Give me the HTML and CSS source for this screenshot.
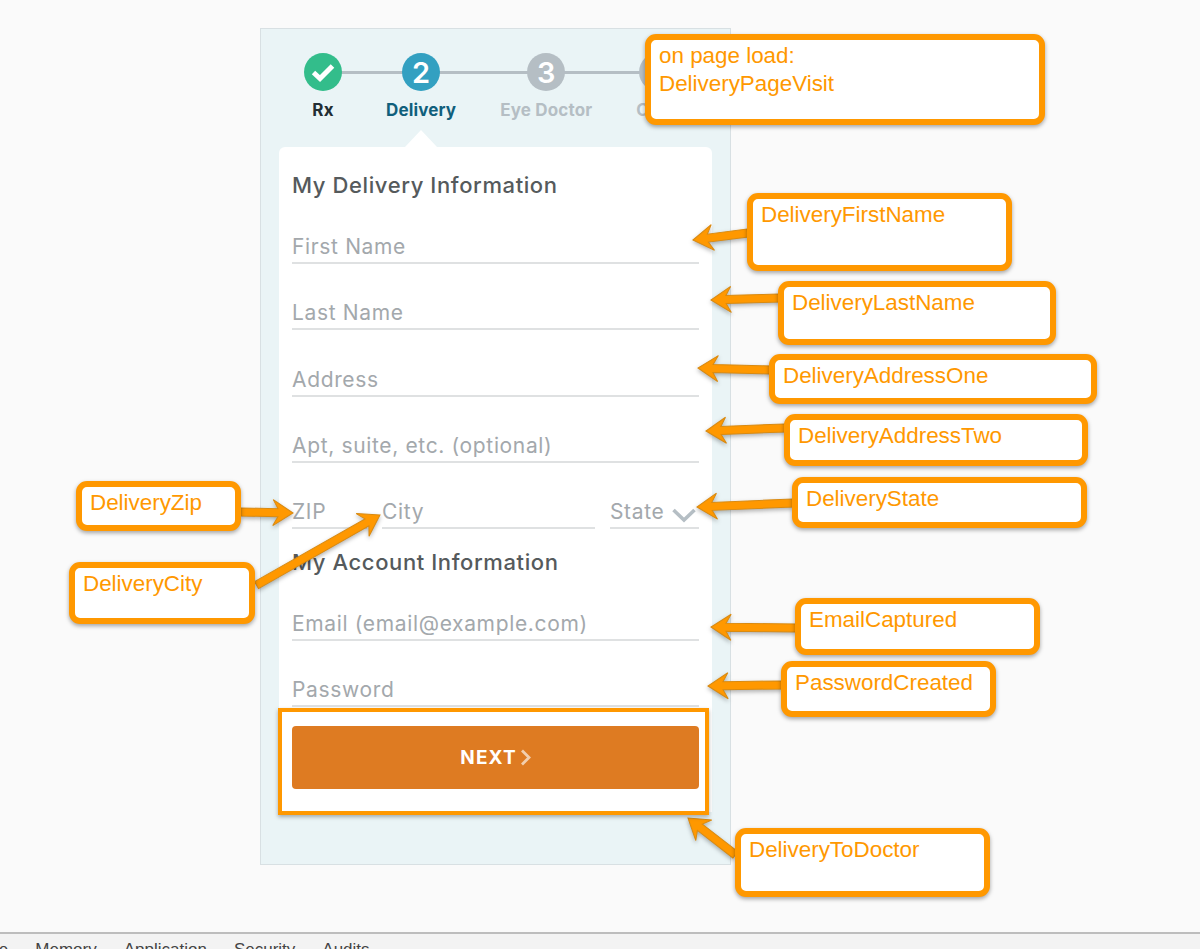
FILE: index.html
```html
<!DOCTYPE html>
<html lang="en">
<head>
  <meta charset="UTF-8" />
  <title>Delivery tracking notes</title>
  <link rel="stylesheet" href="styles.css">
</head>
<body>

  <div class="page">
    <section class="checkout">
      <ol class="steps">
        <li class="step done">
          <span class="step-dot">
            <svg width="24" height="24" viewBox="0 0 24 24"><path d="M2.500 12.500l6.500 6L21.500 6" fill="none" stroke="#fff" stroke-width="5"/></svg>
          </span>
          <span class="step-name">Rx</span>
        </li>
        <li class="step current">
          <span class="step-dot">2</span>
          <span class="step-name">Delivery</span>
        </li>
        <li class="step">
          <span class="step-dot">3</span>
          <span class="step-name">Eye Doctor</span>
        </li>
        <li class="step">
          <span class="step-dot">4</span>
          <span class="step-name">Chec</span>
        </li>
      </ol>

      <form class="panel">
        <h2>My Delivery Information</h2>
        <div class="field"><span>First Name</span></div>
        <div class="field"><span>Last Name</span></div>
        <div class="field"><span>Address</span></div>
        <div class="field"><span>Apt, suite, etc. (optional)</span></div>
        <div class="field-row">
          <div class="field zip"><span>ZIP</span></div>
          <div class="field city"><span>City</span></div>
          <div class="field state">
            <span>State</span>
            <svg width="24" height="15" viewBox="0 0 24 15"><path d="M1.500 2l10.500 10L22.500 2" fill="none" stroke="#b5bec4" stroke-width="3.600"/></svg>
          </div>
        </div>
        <h2 class="account-title">My Account Information</h2>
        <div class="field"><span>Email (email@example.com)</span></div>
        <div class="field"><span>Password</span></div>
        <button type="button" class="next">NEXT <svg width="11" height="17" viewBox="0 0 11 17"><path d="M2 1.500L9 8.500 2 15.500" fill="none" stroke="#f2cfae" stroke-width="2.800"/></svg></button>
      </form>
    </section>
  </div>

  <div class="devtools">
    <span class="tab-cut">Performance</span>
    <span>Memory</span>
    <span>Application</span>
    <span>Security</span>
    <span>Audits</span>
  </div>

  <!-- Annotations drawn over the screenshot -->
  <svg class="arrows" width="1200" height="949" viewBox="0 0 1200 949">
    <g fill="#ff9800" stroke="#d98a10" stroke-width="1">
      <path transform="translate(693 240) rotate(172.700)" d="M0 0L-20-13-15-4-55-4-55 4-15 4-20 13Z"/>
      <path transform="translate(711 300) rotate(178.300)" d="M0 0L-20-13-15-4-68-4-68 4-15 4-20 13Z"/>
      <path transform="translate(698 368) rotate(181.600)" d="M0 0L-20-13-15-4-73-4-73 4-15 4-20 13Z"/>
      <path transform="translate(706 431) rotate(177.800)" d="M0 0L-20-13-15-4-79-4-79 4-15 4-20 13Z"/>
      <path transform="translate(293 513) rotate(1.100)" d="M0 0L-20-13-15-4-52-4-52 4-15 4-20 13Z"/>
      <path transform="translate(380 515) rotate(-29.600)" d="M0 0L-20-13-15-4-142-4-142 4-15 4-20 13Z"/>
      <path transform="translate(697 507) rotate(177.600)" d="M0 0L-20-13-15-4-96-4-96 4-15 4-20 13Z"/>
      <path transform="translate(711 627) rotate(180.700)" d="M0 0L-20-13-15-4-85-4-85 4-15 4-20 13Z"/>
      <path transform="translate(708 686) rotate(179.200)" d="M0 0L-20-13-15-4-74-4-74 4-15 4-20 13Z"/>
      <path transform="translate(688 818) rotate(217.900)" d="M0 0L-20-13-15-4-60-4-60 4-15 4-20 13Z"/>
    </g>
  </svg>

  <div class="next-outline"></div>

  <div class="callout note-visit">on page load:<br>DeliveryPageVisit</div>
  <div class="callout note-first">DeliveryFirstName</div>
  <div class="callout note-last">DeliveryLastName</div>
  <div class="callout note-one">DeliveryAddressOne</div>
  <div class="callout note-two">DeliveryAddressTwo</div>
  <div class="callout note-zip">DeliveryZip</div>
  <div class="callout note-city">DeliveryCity</div>
  <div class="callout note-state">DeliveryState</div>
  <div class="callout note-email">EmailCaptured</div>
  <div class="callout note-password">PasswordCreated</div>
  <div class="callout note-doctor">DeliveryToDoctor</div>

</body>
</html>
```

FILE: styles.css
```css
* {
  box-sizing: border-box;
  margin: 0;
  padding: 0;
}

html, body {
  height: 949px;
  overflow: hidden;
  background: #fafafa;
}

body {
  position: relative;
  display: flex;
  flex-direction: column;
  font-family: "Inter", "Open Sans", sans-serif;
}

.page {
  flex: 1;
  padding: 28px 0 0 260px;
}

.checkout {
  width: 471px;
  height: 837px;
  background: #eaf4f6;
  border: 1px solid #d8e0e3;
  padding: 24px 18px 0;
}

/* Steps */
.steps {
  position: relative;
  display: flex;
  gap: 44px;
  list-style: none;
  padding-left: 25px;
}

.steps::before {
  content: "";
  position: absolute;
  left: 44px;
  top: 18px;
  width: 340px;
  height: 3px;
  background: #b5bec4;
}

.step {
  position: relative;
  display: flex;
  flex-direction: column;
  align-items: center;
  gap: 9px;
  min-width: 38px;
  color: #b5bec4;
}

.step-dot {
  display: flex;
  align-items: center;
  justify-content: center;
  width: 38px;
  height: 38px;
  border-radius: 50%;
  background: #b5bec4;
  color: #fff;
  font-size: 29px;
  font-weight: 600;
}

.step-name {
  font-size: 17px;
  line-height: 20px;
  font-weight: 700;
  letter-spacing: 0.15px;
  white-space: nowrap;
}

.step.done { color: #222d33; }
.step.done .step-dot { background: #33bd8b; }
.step.current { color: #105f7c; }
.step.current .step-dot { background: #33a0c1; }

/* Form panel */
.panel {
  position: relative;
  height: 665px;
  margin-top: 27px;
  padding: 26px 13px 23px;
  background: #fff;
  border-radius: 6px 6px 0 0;
}

.panel::before {
  content: "";
  position: absolute;
  left: 126px;
  top: -17px;
  border-left: 16px solid transparent;
  border-right: 16px solid transparent;
  border-bottom: 17px solid #fff;
}

h2 {
  font-size: 22px;
  line-height: 24px;
  font-weight: 500;
  letter-spacing: 0.6px;
  color: #555a5c;
}

.account-title {
  margin-top: 21px;
}

.field {
  display: flex;
  align-items: flex-end;
  justify-content: space-between;
  height: 66.25px;
  padding-bottom: 3px;
  border-bottom: 2px solid #dfe1e2;
  font-size: 21px;
  line-height: 24px;
  letter-spacing: 0.65px;
  color: #a3a8ac;
}

.panel h2 + .field {
  height: 67px;
}

.field-row {
  display: flex;
  gap: 15px;
}

.zip { width: 75px; }
.city { width: 213px; }
.state { width: 89px; }

.state svg {
  margin: 0 3px 1px 0;
}

.next {
  display: flex;
  align-items: center;
  justify-content: center;
  gap: 3px;
  width: 100%;
  height: 63px;
  margin-top: 19px;
  border: none;
  border-radius: 4px;
  background: #de7b22;
  color: #fff;
  font-family: inherit;
  font-size: 19px;
  font-weight: 700;
  letter-spacing: 1.1px;
}

/* Browser devtools strip, cut off by the bottom of the window */
.devtools {
  display: flex;
  gap: 27px;
  height: 17px;
  overflow: hidden;
  padding-top: 7px;
  background: #f3f3f3;
  border-top: 2px solid #bdbdbd;
  font-family: "Liberation Sans", Arial, sans-serif;
  font-size: 17px;
  line-height: 17px;
  color: #444;
  white-space: nowrap;
}

.tab-cut {
  margin-left: -89px;
}

/* Annotations */
.arrows {
  position: absolute;
  left: 0;
  top: 0;
  filter: drop-shadow(0 2px 2px rgba(0, 0, 0, 0.3));
}

.next-outline {
  position: absolute;
  left: 278px;
  top: 708px;
  width: 431px;
  height: 107px;
  border: 4px solid #ff9800;
  box-shadow: 0 2px 4px rgba(0, 0, 0, 0.3);
}

.callout {
  position: absolute;
  padding: 2px 8px;
  background: #fff;
  border: 6px solid #ff9800;
  border-radius: 11px;
  box-shadow: 0 2px 4px rgba(0, 0, 0, 0.35);
  font-family: "Liberation Sans", Arial, sans-serif;
  font-size: 22.4px;
  line-height: 28px;
  color: #ff9800;
}

.note-visit { left: 645px; top: 34px; width: 400px; height: 91px; }
.note-first { left: 747px; top: 193px; width: 265px; height: 78px; }
.note-last { left: 778px; top: 281px; width: 278px; height: 64px; }
.note-one { left: 769px; top: 354px; width: 328px; height: 50px; }
.note-two { left: 784px; top: 414px; width: 304px; height: 52px; }
.note-zip { left: 76px; top: 481px; width: 165px; height: 50px; }
.note-city { left: 69px; top: 562px; width: 186px; height: 62px; }
.note-state { left: 792px; top: 477px; width: 295px; height: 51px; }
.note-email { left: 795px; top: 598px; width: 245px; height: 57px; }
.note-password { left: 781px; top: 661px; width: 215px; height: 56px; }
.note-doctor { left: 735px; top: 828px; width: 255px; height: 69px; }
```
